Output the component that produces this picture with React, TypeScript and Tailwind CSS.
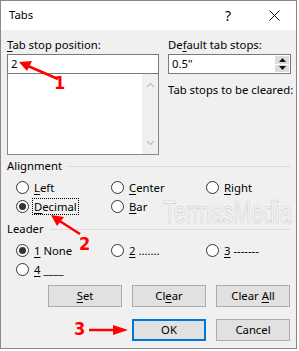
import type { ReactNode } from "react"

function Acc({ pre = "", k, post = "" }: { pre?: string; k: string; post?: string }) {
  return (
    <span>
      {pre}
      <span className="underline underline-offset-2">{k}</span>
      {post}
    </span>
  )
}

function Radio({ checked }: { checked?: boolean }) {
  return (
    <span className="flex h-[13px] w-[13px] shrink-0 items-center justify-center rounded-full border border-[#333] bg-white">
      {checked && <span className="h-[7px] w-[7px] rounded-full bg-[#333]"></span>}
    </span>
  )
}

function Option({ children, checked, focus }: { children: ReactNode; checked?: boolean; focus?: boolean }) {
  return (
    <div className="flex h-[19px] w-[95px] items-center gap-[3px]">
      <Radio checked={checked} />
      <span className={focus ? "border border-dotted border-black px-[1px] leading-[15px]" : "px-[2px] leading-[15px]"}>
        {children}
      </span>
    </div>
  )
}

function Section({ title }: { title: string }) {
  return (
    <div className="flex h-[16px] items-center gap-[6px] pr-[6px]">
      <span className="leading-[16px]">{title}</span>
      <span className="h-px flex-1 bg-[#dadada]"></span>
    </div>
  )
}

function Btn({ children, primary }: { children: ReactNode; primary?: boolean }) {
  return (
    <div
      className={
        primary
          ? "flex h-[22px] w-[74px] items-center justify-center border-2 border-[#0078d7] bg-[#e1e1e1]"
          : "flex h-[22px] w-[74px] items-center justify-center border border-[#adadad] bg-[#e1e1e1]"
      }
    >
      {children}
    </div>
  )
}

export default function App() {
  return (
    <div className="relative h-[351px] w-[299px] overflow-hidden whitespace-nowrap bg-white font-['Segoe_UI','Noto_Sans',sans-serif] text-[11.3px] text-black">
      <div className="flex h-[349px] w-[297px] flex-col border border-[#8a8a8a]">
        {/* title bar */}
        <div className="flex h-[29px] items-center bg-white pl-[8px]">
          <span className="flex-1">Tabs</span>
          <span className="mr-[38px] text-[14px]">?</span>
          <svg width="11" height="11" viewBox="0 0 11 11" className="mr-[16px]">
            <path d="M0.5 0.5 L10.5 10.5 M10.5 0.5 L0.5 10.5" stroke="#111" strokeWidth="1" />
          </svg>
        </div>

        <div className="flex flex-1 flex-col bg-[#f0f0f0] pl-[6px]">
          {/* top */}
          <div className="flex gap-[9px] pt-[7px]">
            <div className="flex w-[152px] flex-col">
              <div className="mb-[1px] leading-[16px]">
                <Acc k="T" post="ab stop position:" />
              </div>
              <div className="flex h-[20px] items-center border border-[#7a7a7a] bg-white pl-[3px]">2</div>
              <div className="flex h-[81px] border border-[#828790] border-t-0 bg-white">
                <div className="flex-1"></div>
                <div className="flex w-[16px] flex-col items-center justify-between bg-[#f0f0f0] py-[8px]">
                  <svg width="9" height="6" viewBox="0 0 9 6">
                    <path d="M1 5 L4.5 1.5 L8 5" fill="none" stroke="#c2c2c2" strokeWidth="1.3" />
                  </svg>
                  <svg width="9" height="6" viewBox="0 0 9 6">
                    <path d="M1 1 L4.5 4.5 L8 1" fill="none" stroke="#c2c2c2" strokeWidth="1.3" />
                  </svg>
                </div>
              </div>
            </div>
            <div className="flex w-[123px] flex-col">
              <div className="mb-[1px] leading-[16px]">
                <Acc pre="De" k="f" post="ault tab stops:" />
              </div>
              <div className="flex h-[20px] items-center border border-[#7a7a7a] bg-white pl-[3px]">
                <span className="flex-1">0.5"</span>
                <div className="flex h-full w-[16px] flex-col gap-px p-px">
                  <div className="flex flex-1 items-center justify-center bg-[#dcdcdc]">
                    <svg width="7" height="4" viewBox="0 0 7 4"><path d="M0 4 L3.5 0 L7 4 Z" fill="#111" /></svg>
                  </div>
                  <div className="flex flex-1 items-center justify-center bg-[#dcdcdc]">
                    <svg width="7" height="4" viewBox="0 0 7 4"><path d="M0 0 L3.5 4 L7 0 Z" fill="#111" /></svg>
                  </div>
                </div>
              </div>
              <div className="mt-[8px] leading-[16px]">Tab stops to be cleared:</div>
            </div>
          </div>

          {/* alignment */}
          <div className="mt-[3px]">
            <Section title="Alignment" />
          </div>
          <div className="mt-[4px] grid grid-cols-[95px_95px_95px] pl-[9px]">
            <Option><Acc k="L" post="eft" /></Option>
            <Option><Acc k="C" post="enter" /></Option>
            <Option><Acc k="R" post="ight" /></Option>
            <Option checked focus><Acc k="D" post="ecimal" /></Option>
            <Option><Acc k="B" post="ar" /></Option>
          </div>

          {/* leader */}
          <div className="mt-[5px]">
            <Section title="Leader" />
          </div>
          <div className="mt-[4px] grid grid-cols-[95px_95px_95px] pl-[9px]">
            <Option checked><Acc k="1" post=" None" /></Option>
            <Option><Acc k="2" post=" ......." /></Option>
            <Option><Acc k="3" post=" -------" /></Option>
            <Option><Acc k="4" post=" ____" /></Option>
          </div>

          {/* buttons */}
          <div className="mt-[6px] flex justify-end gap-[10px] pr-[6px]">
            <Btn><Acc k="S" post="et" /></Btn>
            <Btn><Acc pre="Cl" k="e" post="ar" /></Btn>
            <Btn><Acc pre="Clear " k="A" post="ll" /></Btn>
          </div>
          <div className="mt-[12px] flex justify-end gap-[10px] pr-[6px]">
            <Btn primary>OK</Btn>
            <Btn>Cancel</Btn>
          </div>
        </div>
      </div>

      {/* watermark */}
      <div className="pointer-events-none absolute left-[163px] top-[195px] origin-left scale-x-[0.67] font-['Liberation_Sans',sans-serif] text-[32px] leading-[34px] text-[#f7f7f7] [-webkit-text-stroke:0.7px_#cfcfcf]">
        TermasMedia
      </div>

      {/* annotations */}
      <svg className="pointer-events-none absolute left-0 top-0" width="299" height="351" viewBox="0 0 299 351">
        <path d="M58 79 L28 66" stroke="#f00" strokeWidth="2.5" />
        <path d="M19 62 L32 61 L27 71 Z" fill="#f00" />
        <path d="M80 234 L58 220" stroke="#f00" strokeWidth="2.5" />
        <path d="M51 215 L64 217 L57 226 Z" fill="#f00" />
        <path d="M89 330 L116 330" stroke="#f00" strokeWidth="2.5" />
        <path d="M128 330 L113 325 L113 335 Z" fill="#f00" />
      </svg>
      <span className="absolute left-[54px] top-[74px] font-['DejaVu_Sans',sans-serif] text-[18px] font-bold leading-[18px] text-[#f00] [font-stretch:condensed]">1</span>
      <span className="absolute left-[79px] top-[235px] font-['DejaVu_Sans',sans-serif] text-[18px] font-bold leading-[18px] text-[#f00] [font-stretch:condensed]">2</span>
      <span className="absolute left-[74px] top-[320px] font-['DejaVu_Sans',sans-serif] text-[18px] font-bold leading-[18px] text-[#f00] [font-stretch:condensed]">3</span>
    </div>
  )
}
